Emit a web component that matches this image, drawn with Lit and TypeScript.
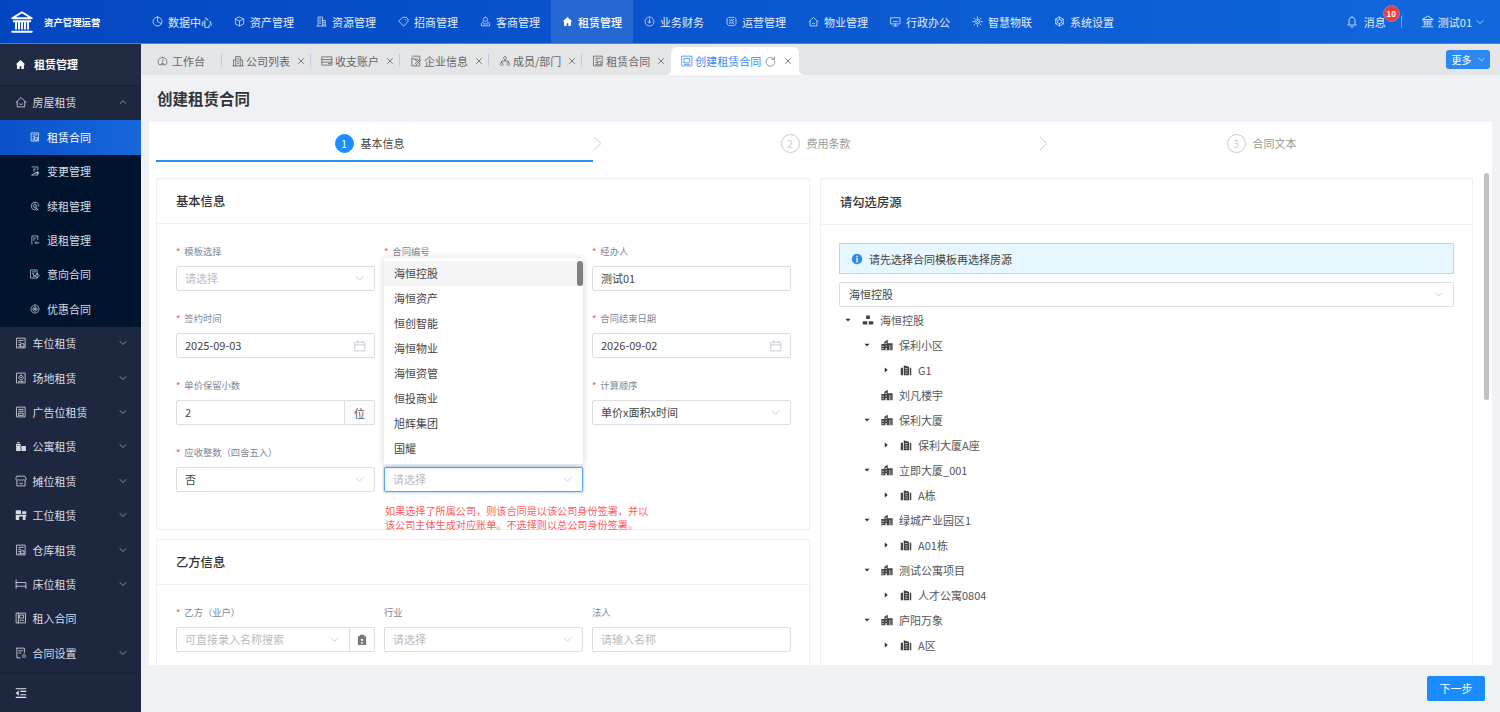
import { LitElement, html, css, svg, nothing } from "lit";
import { customElement } from "lit/decorators.js";

// all icons sit on a 16x16 box, stroke by default, "f:" prefix means filled
const ICONS: Record<string, string> = {
    pie: "M8 1.5a6.5 6.5 0 1 0 6.5 6.5A6.5 6.5 0 0 0 8 1.5M8 1.5V8l5.6 3.2",
    cube: "M8 1.5l6 3v7l-6 3-6-3v-7zM2 4.5l6 3 6-3M8 7.5v7",
    res: "M3 14.5V1.5h6.5v13M9.5 6.5h4v8M1.5 14.5h13M5 4.5h2M5 7.5h2M5 10.5h2M11 9.5h1M11 12h1",
    tag: "M1.5 7 6.5 2h6l2 2.5V8l-6 6.5zM10.5 5.5h.8",
    user: "M8 1.8a3 3 0 1 1-.01 0M5.5 8.5C3.5 9 2 10 2 11.5v2.8h12v-2.8c0-1.5-1.500-2.500-3.500-3M5 11.500h6",
    "f:home": "M8 1.500 1 8h2v6.500h3.800v-4h2.400v4H13V8h2z",
    coin: "M8 1.500a6.500 6.500 0 1 0 .01 0M8 4.500v5M6 8l2 2.500L10 8",
    ops: "M4 2h8l2.500 2.500v7L12 14H4l-2.500-2.500v-7zM8 5.500a2.500 2.500 0 1 0 .01 0M5 5l1 1M11 5l-1 1M5 11l1-1M11 11l-1-1",
    house: "M1.500 8.500 8 2l6.500 6.500M3 7.500v7h10v-7M6 10.500c1 1.200 3 1.200 4 0",
    monitor: "M1.500 2.500h13v9h-13zM8 11.500v3M5 14.500h6M5 8h6",
    chip: "M8 4.500a3.500 3.500 0 1 0 .01 0M8 6.500a1.500 1.500 0 1 0 .01 0M8 1v2M8 13v2M1 8h2M13 8h2M3 3l1.500 1.500M13 3l-1.500 1.500M3 13l1.500-1.500M13 13l-1.500-1.500",
    gear: "M8 1.500l5.600 3.250v6.500L8 14.500l-5.600-3.250v-6.500zM8 5a3 3 0 1 0 .01 0M8 1.500V5M2.400 4.750l3 1.700M13.600 4.750l-3 1.700M2.400 11.250l3-1.700M13.600 11.250l-3-1.700M8 14.500V11",
    bell: "M8 1.500c-2.800 0-4 2-4 4.500v4l-1.500 2h11L12 10V6c0-2.500-1.200-4.500-4-4.500zM6.500 14.500h3",
    bank: "M8 1.500 1.500 5.500h13zM2.500 7.500h11M4 8.500v4M8 8.500v4M12 8.500v4M6 8.500v4M10 8.500v4M1.500 14.500h13",
    dial: "M8 2a6.500 6.500 0 0 0-5 10.600h10A6.500 6.500 0 0 0 8 2zM8 9l1-4M6.500 11h3",
    build: "M2 14.500V6.500h3M5 14.500V2h6v12.500M11 6.500h3v8M1 14.500h14M7 5h2M7 8h2M7 11h2",
    card: "M1.500 2.500h13v11h-13zM1.500 6h13M1.500 9.500h13M10 11.500h3",
    docedit: "M4 1.500h9v6M13 11v3.500H2.500V4zM6 5.500h4M6.500 12l6-6 1.500 1.500-6 6",
    org: "M8 2a2 2 0 1 0 .01 0M3.500 10a2 2 0 1 0 .01 0M12.500 10a2 2 0 1 0 .01 0M8 6v2M3.500 10V8h9v2",
    contract: "M2.500 1.500h11v13h-11zM5 4.500h6M5 7h2.500M8 9h4v4H8zM5 10h1.500M5 12.500h1.500",
    plan: "M1.500 1.500h13v13h-13zM4.500 4.500h7v6h-7zM4.500 12.500h7",
    change: "M3 1.500h9.500v5M12.500 10v4.500H3zM5.500 5h4M5.500 8h2M8 11h6M12 9l2 2-2 2",
    renew: "M14 8A6 6 0 1 0 8 14M8 5a3 3 0 1 0 .01 0M8 8h1M10.500 11.500a1.500 1.500 0 1 0 .01 0M13 14.500l-1.500-1.500",
    exit: "M3 14.500V1.500h9.500v6M5.500 5h4M5.500 8h2M14.500 12.500h-6M10.500 10.500l-2 2 2 2",
    intent: "M1.500 1.500h10v13h-10zM4 4.500h5M4 7h2M11.500 7.500a3 3 0 1 0 .01 0M6 11h2M5 8.500l2 2.500-2 2",
    promo: "M8 1.500a6.500 6.500 0 1 0 .01 0M8 4.500a3.500 3.500 0 1 0 .01 0M6.500 7.200h3M6.500 8.800h3",
    venue: "M2.500 1.500h11v13h-11zM8 4.500a3 3 0 1 0 .01 0M8 7a.5.5 0 1 0 .01 0M5 12.500h6",
    ad: "M2.500 1.500h11v13h-11zM5 4.500h6M5 7h6M5 9.500h6v3H5z",
    "f:apart": "M1.500 14.500V5h6v9.500zM8.500 14.500V8h6v6.500zM3 2.500h3V4H3zM3 7h1v1H3zM5 7h1v1H5z",
    booth: "M3 1.500h10l2 4c0 1.500-2 1.800-3.500.8-1 .9-2.500.9-3.500 0-1 .9-2.500.9-3.500 0C3 7.300 1 7 1 5.500zM2.500 8v6.500h11V8M6 11c1 1 3 1 4 0",
    "f:desk": "M1 1.500h7v5H1zM9.500 3H15v3.500H9.500zM1 7.500h14v2.500h-1v4.500h-3.500V10H5.500v4.500H1z",
    bed: "M1.500 2.500v11.500M1.500 6h13v8M1.500 11h13",
    rentin: "M2 1.500h12v13H2zM4.500 1.500v13M6.500 4h5v4h-5zM6.500 11h5",
    cfg: "M2.500 1.500h10v6M7 14.500H2.500v-13M5 5h5M5 8h3M12 10a2 2 0 1 0 .01 0",
    "f:collapse": "M1 1.500h14v1.500H1zM1 13h14v1.500H1zM7 5h8v1.500H7zM7 9.500h8V11H7zM5 4.500v7L1 8z",
    refresh: "M13.500 5A6.500 6.500 0 1 0 14.500 8M13.800 1.500v3.800H10",
    close: "M3 3l10 10M13 3 3 13",
    down: "M2 5l6 6 6-6",
    up: "M2.500 11 8 5.500l5.500 5.500",
    cal: "M1.500 3h13v11.500h-13zM1.500 6.500h13M5 1v3M11 1v3",
    "f:clip": "M5 1h6v2h2.500v11.500h-11V3H5zM6.500 6.500h3v2.500h-3zM6.500 11h3v1.500h-3z",
    "f:tower": "M1 5h3v10H1zM5 1.500l7 2V15H5zM13 5h2v10h-2zM7 5.500h3v1.200H7zM7 8.500h3v1.200H7zM7 11.500h3v1.200H7z",
    "f:estate": "M.5 6.500h4v-3L9 1v4.500h6.500V15H.5zM6 5h1.500v1.500H6zM6 8.500h1.500V10H6zM6 12h1.500v3H6zM2 9h1.300v1.500H2zM2 12h1.300v1.500H2zM11 8h.6v7H11zM13 8h.6v7H13z",
    "f:tree": "M5.500 2h5v4.500h-5zM1 9.500h6v4.500H1zM9 9.500h6v4.500H9z",
    "f:info": "M8 1a7 7 0 1 0 .01 0zM7 3.500h2v2H7zM7 6.800h2v5.700H7z",
    "f:right": "M5.500 3 11.500 8l-6 5z",
    "f:drop": "M3 5.500h10L8 11z",
};

function icon(name: string, cls = "") {
    const filled = ("f:" + name) in ICONS;
    const d = filled ? ICONS["f:" + name] : ICONS[name];
    return html`<svg class="ic ${cls} ${filled ? "solid" : ""}" viewBox="0 0 16 16">${svg`<path d=${d}></path>`}</svg>`;
}

const NAV = [
    ["pie", "数据中心"], ["cube", "资产管理"], ["res", "资源管理"], ["tag", "招商管理"],
    ["user", "客商管理"], ["home", "租赁管理"], ["coin", "业务财务"], ["ops", "运营管理"],
    ["house", "物业管理"], ["monitor", "行政办公"], ["chip", "智慧物联"], ["gear", "系统设置"],
];

const SUB_MENU = [
    ["contract", "租赁合同"], ["change", "变更管理"], ["renew", "续租管理"],
    ["exit", "退租管理"], ["intent", "意向合同"], ["promo", "优惠合同"],
];

const SIDE_MENU = [
    ["contract", "车位租赁", true], ["venue", "场地租赁", true], ["ad", "广告位租赁", true],
    ["apart", "公寓租赁", true], ["booth", "摊位租赁", true], ["desk", "工位租赁", true],
    ["contract", "仓库租赁", true], ["bed", "床位租赁", true], ["rentin", "租入合同", false],
    ["cfg", "合同设置", true],
] as [string, string, boolean][];

const TABS = [
    ["build", "公司列表"], ["card", "收支账户"], ["docedit", "企业信息"],
    ["org", "成员/部门"], ["contract", "租赁合同"],
];

const COMPANIES = ["海恒控股", "海恒资产", "恒创智能", "海恒物业", "海恒资管", "恒投商业", "旭辉集团", "国耀"];

// level, label, has children
const TREE: [number, string, boolean][] = [
    [0, "海恒控股", true],
    [1, "保利小区", true],
    [2, "G1", true],
    [1, "刘凡楼宇", false],
    [1, "保利大厦", true],
    [2, "保利大厦A座", true],
    [1, "立即大厦_001", true],
    [2, "A栋", true],
    [1, "绿城产业园区1", true],
    [2, "A01栋", true],
    [1, "测试公寓项目", true],
    [2, "人才公寓0804", true],
    [1, "庐阳万象", true],
    [2, "A区", true],
];

@customElement("app-root")
export class AppRoot extends LitElement {
    static styles = css`
        :host {
            display: block;
            width: 1500px;
            height: 712px;
            overflow: hidden;
            font-family: "Noto Sans CJK SC", "Noto Sans", sans-serif;
            font-size: 11px;
            color: #515a6e;
            background: #f0f1f5;
        }

        .ic {
            width: 12px;
            height: 12px;
            flex: none;
            fill: none;
            fill-rule: evenodd;
            stroke: currentColor;
            stroke-width: 1.1;
            stroke-linejoin: round;
            stroke-linecap: round;
        }

        .ic.solid {
            fill: currentColor;
            stroke: none;
        }

        .ic.chev {
            stroke-width: 1.5;
        }

        /* top bar */
        .topbar {
            height: 44px;
            display: flex;
            align-items: center;
            color: #e4ebf8;
            background: linear-gradient(90deg, #0346c1, #1168dd);
            border-bottom: 1px solid #3d86e4;
            box-sizing: border-box;
        }

        .logo {
            width: 141px;
            flex: none;
            display: flex;
            align-items: center;
            gap: 10px;
            padding-left: 10px;
            box-sizing: border-box;
            color: #fff;
            font-size: 9.4px;
            font-weight: 700;
            white-space: nowrap;
        }

        .logo .ic {
            width: 24px;
            height: 24px;
            stroke-width: 1.3;
        }

        .nav {
            display: flex;
            height: 100%;
        }

        .nav-item {
            width: 82px;
            padding-left: 11px;
            box-sizing: border-box;
            display: flex;
            align-items: center;
            gap: 5px;
            white-space: nowrap;
        }

        .nav-item .ic {
            width: 11px;
            height: 11px;
        }

        .nav-item.on {
            background: rgba(255, 255, 255, 0.12);
            color: #fff;
            font-weight: 500;
        }

        .top-right {
            margin-left: auto;
            padding-right: 16px;
            display: flex;
            align-items: center;
        }

        .msg {
            position: relative;
            margin-left: 6px;
        }

        .badge {
            position: absolute;
            left: 19px;
            top: -9px;
            width: 15px;
            height: 15px;
            border: 1px solid #5f93e0;
            border-radius: 50%;
            background: #f5383f;
            color: #fff;
            font-size: 8px;
            font-weight: 700;
            line-height: 15px;
            text-align: center;
        }

        .top-sep {
            width: 1px;
            height: 12px;
            margin: 0 19px 0 15px;
            background: #6f9fe4;
        }

        .top-right .bank {
            width: 13px;
            height: 13px;
        }

        .account {
            margin: 0 4px;
        }

        .top-right .chev {
            width: 8px;
            height: 8px;
        }

        .frame {
            display: flex;
            height: 668px;
        }

        /* side menu */
        .side {
            width: 141px;
            flex: none;
            display: flex;
            flex-direction: column;
            background: #1e2740;
            color: #d8dbe2;
        }

        .side-title {
            height: 41.8px;
            display: flex;
            align-items: center;
            gap: 8px;
            padding-left: 15px;
            color: #fff;
            font-weight: 700;
            background: #212a43;
            border-bottom: 1px solid #1a2238;
            box-sizing: border-box;
        }

        .side-title .ic {
            width: 11px;
            height: 11px;
        }

        .side-row {
            height: 34.4px;
            display: flex;
            align-items: center;
            gap: 5.5px;
            padding: 0 0 1px 15px;
            box-sizing: border-box;
        }

        .side-row .chev {
            width: 8px;
            height: 8px;
            margin-left: auto;
            margin-right: 14px;
            color: #aab0bf;
        }

        .side-sub {
            background: #00142d;
        }

        .side-sub .side-row {
            padding-left: 30px;
            gap: 7px;
        }

        .side-sub .ic {
            width: 10px;
            height: 10px;
        }

        .side-row.on {
            background: linear-gradient(90deg, #0a50c6, #1668dc);
            color: #fff;
        }

        .side-foot {
            margin-top: auto;
            height: 39px;
            padding-left: 15px;
            display: flex;
            align-items: center;
            border-top: 1px solid #1a2238;
            color: #e6e8ee;
        }

        /* main */
        .main {
            flex: 1;
            min-width: 0;
            display: flex;
            flex-direction: column;
        }

        .tabs {
            height: 31px;
            flex: none;
            display: flex;
            align-items: flex-start;
            box-sizing: border-box;
            padding: 3px 10px 0 6px;
            background: #e4e5e7;
            color: #666;
        }

        .tab {
            position: relative;
            height: 28px;
            display: flex;
            align-items: center;
            gap: 2px;
            padding: 0 6px 0 10px;
            white-space: nowrap;
        }

        .tab:not(.on):not(.last)::after {
            content: "";
            position: absolute;
            right: 0;
            top: 7px;
            height: 13px;
            width: 1px;
            background: #b9cfe6;
        }

        .tab .x {
            width: 8px;
            height: 8px;
            margin-left: 5px;
            color: #777;
            stroke-width: 1.9;
        }

        .tab.first {
            padding-right: 17px;
            gap: 4px;
        }

        .tab.first .ic {
            width: 11px;
            height: 11px;
        }

        .tab.on {
            background: #fff;
            border-radius: 6px 6px 0 0;
            color: #3b8bf0;
            padding-right: 7px;
        }

        .tab.on::before,
        .tab.on::after {
            content: "";
            position: absolute;
            bottom: 0;
            width: 6px;
            height: 6px;
        }

        .tab.on::before {
            left: -6px;
            background: radial-gradient(circle at 0 0, transparent 6px, #fff 6.5px);
        }

        .tab.on::after {
            right: -6px;
            background: radial-gradient(circle at 100% 0, transparent 6px, #fff 6.5px);
        }

        .tab .spin {
            width: 11px;
            height: 11px;
            margin-left: 2px;
            color: #777;
        }

        .tab.on .x {
            margin-left: 6px;
            color: #777;
        }

        .more {
            margin: 3px 0 0 auto;
            width: 44px;
            height: 19px;
            box-sizing: border-box;
            display: flex;
            align-items: center;
            justify-content: center;
            gap: 6px;
            border-radius: 3px;
            background: #2d88f2;
            color: #fff;
            font-size: 10px;
        }

        .more .ic {
            width: 7px;
            height: 7px;
            stroke-width: 1.5;
        }

        .page-title {
            height: 47px;
            flex: none;
            margin: 0;
            padding-left: 16px;
            font-size: 15.500px;
            font-weight: 700;
            line-height: 47px;
            color: #333;
        }

        .sheet {
            position: relative;
            height: 543px;
            flex: none;
            margin: 0 8px;
            padding: 0 7px;
            background: #fff;
            overflow: hidden;
        }

        .thumb {
            position: absolute;
            right: 3px;
            top: 51px;
            width: 5px;
            height: 227px;
            border-radius: 3px;
            background: #c1c1c1;
        }

        .steps {
            display: flex;
            height: 40px;
        }

        .step {
            width: 446px;
            flex: none;
            display: flex;
        }

        .step-main {
            width: 437px;
            height: 40px;
            flex: none;
            box-sizing: border-box;
            padding: 4px 10px 0 0;
            display: flex;
            align-items: center;
            justify-content: center;
            gap: 7px;
            border-bottom: 2px solid transparent;
            color: #999;
        }

        .step.on .step-main {
            border-bottom-color: #2d8cf0;
            color: #444;
        }

        .dot {
            width: 19px;
            height: 19px;
            box-sizing: border-box;
            border: 1px solid #ccc;
            border-radius: 50%;
            color: #ccc;
            font-size: 10px;
            line-height: 17px;
            text-align: center;
        }

        .step.on .dot {
            border-color: #1890ff;
            background: #1890ff;
            color: #fff;
        }

        .step .arrow {
            width: 9px;
            height: 15px;
            margin-top: 14px;
            color: #ccc;
            fill: none;
            stroke: currentColor;
        }

        .panels {
            display: grid;
            grid-template-columns: 654px 653px;
            gap: 10px;
            padding-top: 16px;
        }

        .stack {
            display: flex;
            flex-direction: column;
            gap: 9px;
        }

        .panel {
            box-sizing: border-box;
            border: 1px solid #f0f0f2;
        }

        .panel.base {
            height: 352px;
        }

        .panel.party {
            height: 200px;
        }

        .panel-head {
            height: 45px;
            box-sizing: border-box;
            padding-left: 19px;
            display: flex;
            align-items: center;
            border-bottom: 1px solid #f0f0f2;
            font-size: 12.300px;
            font-weight: 500;
            color: #333;
        }

        .panel.tall .panel-head {
            height: 46px;
        }

        .form {
            display: grid;
            grid-template-columns: repeat(3, 199px);
            column-gap: 9px;
            row-gap: 20px;
            padding: 20px 19px 0;
        }

        .field label {
            display: block;
            height: 14px;
            margin-bottom: 8px;
            font-size: 9.300px;
            line-height: 14px;
            color: #808695;
            white-space: nowrap;
        }

        .field label.req::before {
            content: "*";
            margin-right: 4px;
            color: #ff4d4f;
        }

        .control {
            height: 25px;
            box-sizing: border-box;
            display: flex;
            align-items: center;
            padding: 0 8px 2px;
            border: 1px solid #dcdee2;
            border-radius: 2px;
            background: #fff;
            color: #444;
            white-space: nowrap;
        }

        .control .ph {
            color: #bbb;
        }

        .control .ic {
            margin-left: auto;
            margin-top: 2px;
            color: #c0c4cc;
        }

        .control .chev {
            width: 9px;
            height: 9px;
            margin-right: 2px;
        }

        .control.focus {
            border-color: #57a3f3;
            box-shadow: 0 0 2px 1px rgba(45, 140, 240, 0.35);
        }

        .joined {
            display: flex;
        }

        .joined .control {
            flex: 1;
            min-width: 0;
            border-radius: 2px 0 0 2px;
        }

        .addon {
            width: 30px;
            height: 25px;
            flex: none;
            box-sizing: border-box;
            display: flex;
            align-items: center;
            justify-content: center;
            border: 1px solid #dcdee2;
            border-left: 0;
            border-radius: 0 2px 2px 0;
            background: #fafafa;
            color: #555;
        }

        .addon.light {
            width: 25px;
            background: #fff;
            color: #777;
        }

        .select-wrap {
            position: relative;
        }

        .menu {
            position: absolute;
            left: 0;
            bottom: calc(100% + 3px);
            width: 198.500px;
            padding: 3px 0;
            background: #fff;
            box-shadow: 0 1px 8px rgba(0, 0, 0, 0.18);
            z-index: 2;
        }

        .menu div {
            height: 25px;
            padding-left: 10px;
            line-height: 25px;
            color: #444;
        }

        .menu div.hover {
            background: #f5f5f5;
        }

        .menu-bar {
            position: absolute;
            right: 0;
            top: 3px;
            width: 6px;
            height: 100px;
            padding: 0 !important;
            border-radius: 3px;
            background: #808080;
        }

        .note {
            grid-column: 2 / 4;
            margin: -8px 0 0 1px;
            font-size: 10.150px;
            line-height: 14px;
            color: #ff5a5f;
            white-space: nowrap;
        }

        .side-body {
            padding: 18px 18px 0 18px;
        }

        .side-body .control {
            padding-left: 9px;
        }

        .alert {
            height: 31px;
            box-sizing: border-box;
            margin-bottom: 8px;
            padding-left: 11px;
            display: flex;
            align-items: center;
            gap: 6px;
            border: 1px solid #abdcff;
            background: #e6f7ff;
            color: #444;
        }

        .alert .ic {
            color: #2d8cf0;
        }

        .tree-row {
            height: 25px;
            display: flex;
            align-items: center;
            color: #555;
            white-space: nowrap;
        }

        .tree-row .caret {
            width: 8px;
            height: 8px;
            margin-right: 10px;
            color: #333;
        }

        .tree-row .kind {
            margin-right: 6px;
            color: #444;
        }

        .blank {
            width: 18px;
            flex: none;
        }

        .actions {
            flex: 1;
            display: flex;
            align-items: center;
            justify-content: flex-end;
            padding-right: 15px;
        }

        .next {
            width: 58px;
            height: 25px;
            border-radius: 2px;
            background: #1a8cff;
            color: #fff;
            font-size: 11px;
            line-height: 25px;
            text-align: center;
        }
    `;

    renderField(label: string, value: string, opts: { req?: boolean; ph?: boolean; tail?: string } = {}) {
        const tail = opts.tail ?? "down";
        return html`
            <div class="field">
                <label class=${opts.req === false ? "" : "req"}>${label}</label>
                <div class="control">
                    <span class=${opts.ph ? "ph" : ""}>${value}</span>
                    ${tail === "none" ? nothing : icon(tail, tail === "down" ? "chev" : "")}
                </div>
            </div>
        `;
    }

    renderTree() {
        return TREE.map(([level, label, open]) => {
            const isLeafLevel = level === 2;
            const kind = level === 0 ? "tree" : level === 1 ? "estate" : "tower";
            return html`
                <div class="tree-row" style="padding-left:${5 + level * 19}px">
                    ${open ? icon(isLeafLevel ? "right" : "drop", "caret") : html`<span class="blank"></span>`}
                    ${icon(kind, "kind")}
                    <span>${label}</span>
                </div>
            `;
        });
    }

    render() {
        return html`
            <header class="topbar">
                <div class="logo">${icon("bank")}<span>资产管理运营</span></div>
                <nav class="nav">
                    ${NAV.map(([ic, text]) => html`
                        <div class="nav-item ${text === "租赁管理" ? "on" : ""}">${icon(ic)}<span>${text}</span></div>
                    `)}
                </nav>
                <div class="top-right">
                    ${icon("bell")}
                    <span class="msg">消息<span class="badge">10</span></span>
                    <span class="top-sep"></span>
                    ${icon("bank", "bank")}
                    <span class="account">测试01</span>
                    ${icon("down", "chev")}
                </div>
            </header>

            <div class="frame">
                <aside class="side">
                    <div class="side-title">${icon("home")}<span>租赁管理</span></div>
                    <div class="side-row">${icon("house")}<span>房屋租赁</span>${icon("up", "chev")}</div>
                    <div class="side-sub">
                        ${SUB_MENU.map(([ic, text], i) => html`
                            <div class="side-row ${i === 0 ? "on" : ""}">${icon(ic)}<span>${text}</span></div>
                        `)}
                    </div>
                    ${SIDE_MENU.map(([ic, text, more]) => html`
                        <div class="side-row">${icon(ic)}<span>${text}</span>${more ? icon("down", "chev") : nothing}</div>
                    `)}
                    <div class="side-foot">${icon("collapse")}</div>
                </aside>

                <main class="main">
                    <div class="tabs">
                        <div class="tab first">${icon("dial")}<span>工作台</span></div>
                        ${TABS.map(([ic, text], i) => html`
                            <div class="tab ${i === TABS.length - 1 ? "last" : ""}">
                                ${icon(ic)}<span>${text}</span>${icon("close", "x")}
                            </div>
                        `)}
                        <div class="tab on">
                            ${icon("plan")}<span>创建租赁合同</span>${icon("refresh", "spin")}${icon("close", "x")}
                        </div>
                        <div class="more"><span>更多</span>${icon("down")}</div>
                    </div>

                    <h1 class="page-title">创建租赁合同</h1>

                    <section class="sheet">
                        <div class="steps">
                            ${["基本信息", "费用条款", "合同文本"].map((text, i) => html`
                                <div class="step ${i === 0 ? "on" : ""}">
                                    <div class="step-main"><span class="dot">${i + 1}</span><span>${text}</span></div>
                                    ${i < 2 ? html`<svg class="arrow" viewBox="0 0 9 15"><path d="M1 1l7 6.500-7 6.500"></path></svg>` : nothing}
                                </div>
                            `)}
                        </div>

                        <div class="panels">
                            <div class="stack">
                                <div class="panel base">
                                    <div class="panel-head">基本信息</div>
                                    <div class="form">
                                        ${this.renderField("模板选择", "请选择", { ph: true })}
                                        ${this.renderField("合同编号", "", { tail: "none" })}
                                        ${this.renderField("经办人", "测试01", { tail: "none" })}
                                        ${this.renderField("签约时间", "2025-09-03", { tail: "cal" })}
                                        ${this.renderField("", "", { req: false, tail: "none" })}
                                        ${this.renderField("合同结束日期", "2026-09-02", { tail: "cal" })}
                                        <div class="field">
                                            <label class="req">单价保留小数</label>
                                            <div class="joined">
                                                <div class="control">2</div>
                                                <div class="addon">位</div>
                                            </div>
                                        </div>
                                        ${this.renderField("", "", { req: false, tail: "none" })}
                                        ${this.renderField("计算顺序", "单价x面积x时间")}
                                        ${this.renderField("应收整数（四舍五入）", "否")}
                                        <div class="field">
                                            <label></label>
                                            <div class="select-wrap">
                                                <div class="menu">
                                                    ${COMPANIES.map((name, i) => html`<div class=${i === 0 ? "hover" : ""}>${name}</div>`)}
                                                    <div class="menu-bar"></div>
                                                </div>
                                                <div class="control focus">
                                                    <span class="ph">请选择</span>${icon("down", "chev")}
                                                </div>
                                            </div>
                                        </div>
                                        <div></div>
                                        <div class="note">
                                            如果选择了所属公司，则该合同是以该公司身份签署，并以<br />该公司主体生成对应账单。不选择则以总公司身份签署。
                                        </div>
                                    </div>
                                </div>

                                <div class="panel party">
                                    <div class="panel-head">乙方信息</div>
                                    <div class="form">
                                        <div class="field">
                                            <label class="req">乙方（业户）</label>
                                            <div class="joined">
                                                <div class="control"><span class="ph">可直接录入名称搜索</span>${icon("down", "chev")}</div>
                                                <div class="addon light">${icon("clip")}</div>
                                            </div>
                                        </div>
                                        ${this.renderField("行业", "请选择", { req: false, ph: true })}
                                        ${this.renderField("法人", "请输入名称", { req: false, ph: true, tail: "none" })}
                                    </div>
                                </div>
                            </div>

                            <div class="panel tall">
                                <div class="panel-head">请勾选房源</div>
                                <div class="side-body">
                                    <div class="alert">${icon("info")}<span>请先选择合同模板再选择房源</span></div>
                                    <div class="control"><span>海恒控股</span>${icon("down", "chev")}</div>
                                    ${this.renderTree()}
                                </div>
                            </div>
                        </div>
                        <div class="thumb"></div>
                    </section>

                    <div class="actions"><div class="next">下一步</div></div>
                </main>
            </div>
        `;
    }
}
